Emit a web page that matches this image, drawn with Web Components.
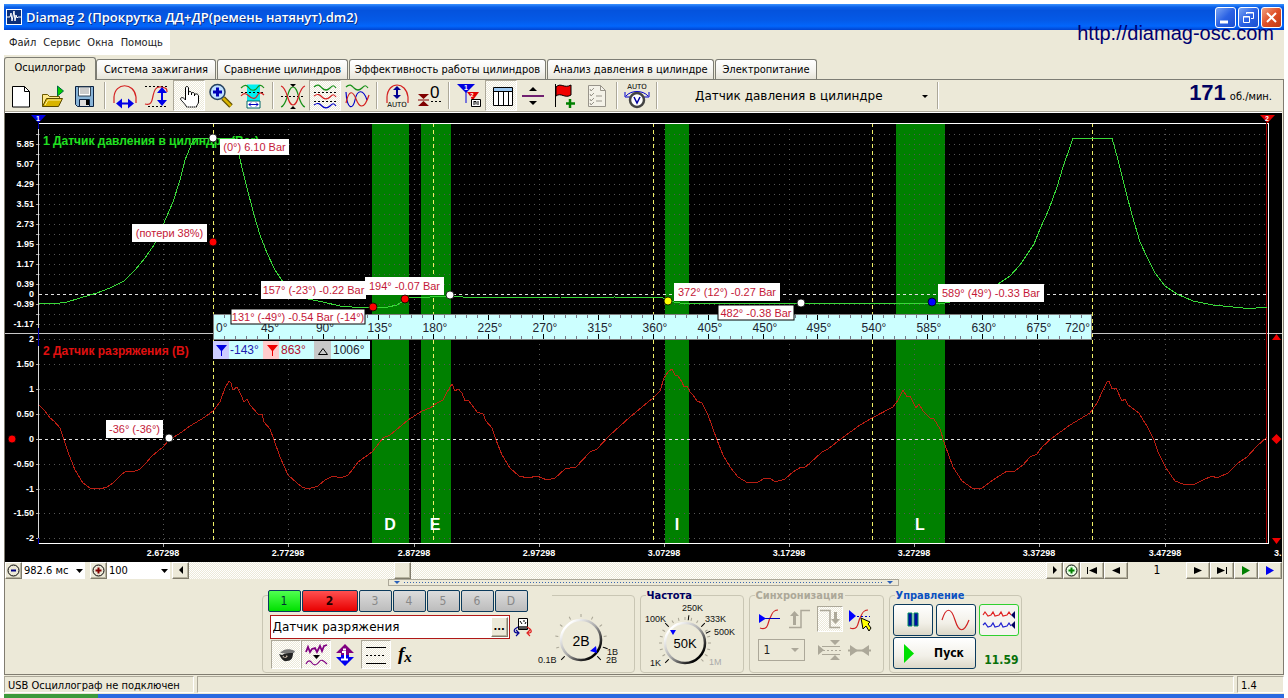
<!DOCTYPE html>
<html lang="ru">
<head>
<meta charset="utf-8">
<title>Diamag 2 (Прокрутка ДД+ДР(ремень натянут).dm2)</title>
<style>
html, body { margin: 0; background: #fff; }
body { font: 11px/14px "DejaVu Sans Condensed", "DejaVu Sans", sans-serif; color: #000; padding: 4px 4px 0; }
</style>
</head>
<body>
<dm-window></dm-window>

<script>
const define = (name, html, setup) => {
  const tpl = document.createElement('template');
  tpl.innerHTML = html;
  customElements.define(name, class extends HTMLElement {
    constructor() {
      super();
      this.attachShadow({ mode: 'open' }).append(tpl.content.cloneNode(true));
    }
    connectedCallback() { if (setup) setup(this.shadowRoot, this); }
  });
};
const XP_BUTTON = `background:#ece9d8;border:1px solid;border-color:#fff #807c6c #807c6c #fff;box-shadow:inset -1px -1px #b8b4a0;`;
const CHECKER = `repeating-conic-gradient(#fff 0 25%, #ece9d8 0 50%) 0 0/2px 2px`;

/* ---------- title bar ---------- */
define('dm-titlebar', `
<style>
:host { display: flex; align-items: center; height: 26px; padding: 0 2px; gap: 4px;
  background: linear-gradient(#3a92ff, #0a5fe8 12%, #0553dd 25%, #0559e6 60%, #0266fc 85%, #0144d0); }
h1 { flex: 1; margin: 0; color: #fff; font: 600 13px/16px "Open Sans", sans-serif; text-shadow: 1px 1px #0a2f86; white-space: nowrap; }
svg { display: block; }
.btns { display: flex; gap: 2px; }
button { width: 21px; height: 21px; padding: 0; border: 1px solid #fff; border-radius: 3px; background: linear-gradient(135deg, #7ba4f2, #2b62e4 50%, #1a4fd0); }
button.close { background: linear-gradient(135deg, #f0a080, #df4e26 50%, #c03a12); }
</style>
<svg width="16" height="16" viewBox="0 0 16 16" aria-hidden="true"><rect width="16" height="16" fill="#fff"/><rect x="1" y="1" width="14" height="14" fill="#0c2f78"/><path d="M1 8h3l1-4 1 8 2-10 1 10 1-6 1 3 1-1h3" fill="none" stroke="#fff"/></svg>
<h1>Diamag 2 (Прокрутка ДД+ДР(ремень натянут).dm2)</h1>
<div class="btns">
<button aria-label="Свернуть"><svg width="19" height="19"><path d="M4 14h8" stroke="#fff" stroke-width="3"/></svg></button>
<button aria-label="Восстановить"><svg width="19" height="19" fill="none" stroke="#fff"><path d="M7.5 6V4.500h7v6H12M7 5h8" /><path d="M4.500 8.500h6v6h-6zM4 9h7"/></svg></button>
<button class="close" aria-label="Закрыть"><svg width="19" height="19"><path d="M5 5l9 9M14 5l-9 9" stroke="#fff" stroke-width="2"/></svg></button>
</div>`);

/* ---------- menu ---------- */
define('dm-menubar', `
<style>
:host { display: flex; height: 25px; }
nav { display: flex; align-items: center; gap: 7px; padding: 0 7px 0 5px; background: #fff; }
a { color: #222; text-decoration: none; }
</style>
<nav><a href="#file">Файл</a><a href="#service">Сервис</a><a href="#windows">Окна</a><a href="#help">Помощь</a></nav>`);

/* ---------- tabs ---------- */
define('dm-tab', `
<style>
:host { display: block; }
button { display: block; box-sizing: border-box; width: 100%; height: 20px; margin: 0; padding: 0; font: inherit; color: #000; white-space: nowrap;
  border: 1px solid #7d7d74; border-bottom: 0; border-radius: 3px 3px 0 0; background: linear-gradient(#fff, #f4f3ee 60%, #e6e4d8); }
:host([selected]) { margin-right: -1px; }
:host([selected]) button { height: 23px; margin-bottom: -1px; padding-bottom: 2px; background: #ece9d8; position: relative; }
</style>
<button role="tab"><slot></slot></button>`, (root, el) => root.querySelector('button').setAttribute('aria-selected', el.hasAttribute('selected')));

define('dm-tabs', `
<style>
:host { display: block; border-bottom: 1px solid #7d7d74; }
div { display: flex; align-items: flex-end; height: 24px; gap: 1px; }
</style>
<div role="tablist">
<dm-tab selected style="width:92px">Осциллограф</dm-tab>
<dm-tab style="width:120px">Система зажигания</dm-tab>
<dm-tab style="width:131px">Сравнение цилиндров</dm-tab>
<dm-tab style="width:197px">Эффективность работы цилиндров</dm-tab>
<dm-tab style="width:167px">Анализ давления в цилиндре</dm-tab>
<dm-tab style="width:102px">Электропитание</dm-tab>
</div>`);

/* ---------- tool bar ---------- */
define('dm-tool', `
<style>
:host { display: block; width: 32px; height: 31px; }
button { display: block; width: 100%; height: 100%; padding: 0; border: 1px solid transparent; background: none; overflow: hidden; }
:host([pressed]) button { border-color: #aca899 #fff #fff #aca899; background: ${CHECKER}; }
::slotted(svg) { display: block; margin: -1px; }
</style>
<button><slot></slot></button>`, (root, el) => root.querySelector('button').setAttribute('aria-label', el.getAttribute('name')));

const icons = [
['Новый', '<path d="M7.5 5.500h12l5 5v15.500h-17z" fill="#fff" stroke="#000"/><path d="M19.500 5.500v5h5" fill="none" stroke="#000"/>'],
['Открыть', '<path d="M5.500 25.500v-12h5l2 2h10v3" fill="#ffe98a" stroke="#6b5a00"/><path d="M5.500 25.500l4-8h16l-4 8z" fill="#d8b400" stroke="#5a4a00"/><path d="M8 24l3-5h13" fill="none" stroke="#fff2a0"/><path d="M20.500 5v10l6-5z" fill="#00d000" stroke="#064"/>'],
['Сохранить', '<path d="M6.500 5.500h18v20h-16l-2-2z" fill="#88b4d8" stroke="#0a2040"/><path d="M9.500 6h12v9h-12z" fill="#fff" stroke="#345"/><path d="M11 8h9M11 10h9M11 12h9" stroke="#999"/><path d="M10.500 18.500h10v7h-10z" fill="#ddd" stroke="#0a2040"/><path d="M17 19h3v5h-3z" fill="#000"/>'],
'sep',
['Масштаб по горизонтали', '<path d="M5 22V16C6 1 25 1 27 16v6" fill="none" stroke="#d42020" stroke-width="1.2"/><path d="M7 22.500l6-5v4h6v-4l6 5-6 5v-4h-6v4z" fill="#0000e8"/>'],
['Масштаб по вертикали', '<path d="M4 5.500h22M7 25.500h20" stroke="#000" stroke-dasharray="2"/><path d="M4 23c7 2 7-4 8-8s2-10 8-9 6 2 6 5" fill="none" stroke="#d42020" stroke-width="1.2"/><path d="M21 6l5 6h-4v7h4l-5 6-5-6h4v-7h-4z" fill="#0000e8"/>'],
['Рука', '<path d="M12.500 18V7c0-2 3-2 3 0v7-2c0-2 3-2 3 0v2-1c0-2 3-2 3 0v2-1c1-2 4-1 4 1v6c0 2-2 3-2 5h-10c-1-3-6-7-6-8s2-3 5 1z" fill="#fff" stroke="#000"/><path d="M12 26h13" stroke="#fff" stroke-dasharray="1"/>', 1],
['Лупа', '<path d="M18 17l8 8" stroke="#5a4a00" stroke-width="5"/><path d="M18 17l8 8" stroke="#d8b400" stroke-width="2.5"/><circle cx="12.500" cy="11" r="7.5" fill="#bfe0ff" stroke="#24405e" stroke-width="1.5"/><path d="M12.500 6.500v9M8 11h9" stroke="#0000b8" stroke-width="3"/>'],
['Выделение', '<path d="M10 3.500h13v23h-13z" fill="#00f0f0"/><path d="M4 7c4-4 6-3 8 0s6 3 8 0 4-4 7 0" fill="none" stroke="#189018" stroke-width="1.2"/><path d="M4 11.500h24" stroke="#000" stroke-dasharray="2"/><path d="M4 15c3-4 6-2 8 0s6 4 8 0 4-4 7-1" fill="none" stroke="#d42020" stroke-width="1.2"/><path d="M10 20h13v7h-13z" fill="#fff" stroke="#066"/><path d="M12 23.500h9M14 21.500l-2 2 2 2M19 21.500l2 2-2 2" fill="none" stroke="#0000c0"/>'],
'sep',
['Сложить', '<path d="M4 15.500h24" stroke="#000" stroke-dasharray="2"/><path d="M4 26C11 24 10 6 16 6s5 18 12 20" fill="none" stroke="#189018" stroke-width="1.2"/><path d="M4 5c7 2 6 19 12 19s5-17 12-19" fill="none" stroke="#d42020" stroke-width="1.2"/><path d="M13 3h6l-3 3zM13 28h6l-3-3z"/>'],
['Отдельно', '<g fill="none" stroke-width="1.2"><path d="M5 6c4-4 6-1 8 1s5 3 8 0 4-3 6 0" stroke="#189018"/><path d="M5 15c4-3 6-1 8 1s5 3 8 0 4-3 6 0" stroke="#d42020"/><path d="M5 24c4-3 6-1 8 1s5 3 8 0 4-3 6 0" stroke="#0000c8"/><path d="M5 11.500h23M5 20.500h23" stroke="#000" stroke-width="1" stroke-dasharray="2"/></g>', 1],
['Вместе', '<g fill="none" stroke-width="1.2"><path d="M5 6c4-4 6-1 8 1s5 3 8 0 4-3 6 0" stroke="#189018"/><path d="M5 11c1 18 7 18 9 8s8-12 12 0" stroke="#0000c8"/><path d="M5 22c3-14 7-12 10-4s8 12 13-4" stroke="#d42020"/></g>'],
'sep',
['Авто усиление', '<path d="M6 22V16C7 0 25 0 27 16v6" fill="none" stroke="#d42020" stroke-width="1.2"/><path d="M16 5l4 4h-3v5h3l-4 4-4-4h3V9h-3z" fill="#000090"/><text x="16" y="26" text-anchor="middle" font-size="7" font-family="DejaVu Sans">AUTO</text>'],
['Ноль', '<path d="M5 13h11l-5.500 5zM5 25h11l-5.500-5z" fill="#800000"/><path d="M5 19h11" stroke="#800000"/><text x="17" y="17" font-size="17" font-family="Liberation Sans">0</text><path d="M18 20.500h10" stroke="#000" stroke-dasharray="2"/>'],
'sep',
['Маркеры', '<path d="M4 3h18l-9 9z" fill="#0000e0"/><path d="M13 10v12" stroke="#0000e0"/><path d="M14 11h12l-6 8z" fill="#e00000"/><path d="M19 15v10" stroke="#e00000"/><path d="M18.500 18.500h9v7h-9z" fill="#fff" stroke="#000"/><path d="M21 20v4M21 20.500h2v3M25 20v4" stroke="#000" fill="none"/><text x="13" y="9" text-anchor="middle" font-size="7" font-weight="bold" fill="#fff" font-family="Liberation Sans">1</text><text x="19" y="16" text-anchor="middle" font-size="6" font-weight="bold" fill="#fff" font-family="Liberation Sans">2</text>'],
['Таблица', '<path d="M8.500 6.500h19v18h-19z" fill="#fff" stroke="#000"/><path d="M9 7h18v3h-18z" fill="#9cc8f0"/><path d="M8 10.500h20M13.500 10v15M18.500 10v15M23.500 10v15" stroke="#000" fill="none"/>', 1],
['Разделить', '<path d="M12 10h8l-4-4zM12 20h8l-4 4z"/><path d="M5 15h22" stroke="#702070" stroke-width="2"/>'],
['Добавить флаг', '<path d="M6.500 3v23" stroke="#000"/><path d="M7 6c5-5 8 2 15-2v10c-6 4-10-3-15 1z" fill="#f00000" stroke="#000"/><path d="M21 18v9M17 22.500h9" stroke="#008000" stroke-width="2.500"/>'],
['Отчёт', '<path d="M7.5 4.500h12l5 5v16h-17z" fill="#f4f2e8" stroke="#98948a"/><path d="M19.500 4.500v5h5M9 8l1 2 3-3M9 13l1 2 3-3M9 18l1 2 3-3M9 22l1 2 3-3M15 15h6M15 20h6" fill="none" stroke="#98948a"/>'],
'sep',
['Авто вольт', '<text x="16" y="8" text-anchor="middle" font-size="7" font-family="DejaVu Sans">AUTO</text><path d="M5 15c5-6 17-6 22 0M4 11v5h5M28 11v5h-5" fill="none" stroke="#0000d0"/><circle cx="16" cy="19" r="7" fill="#fff" stroke="#444" stroke-width="2.5"/><path d="M13 16l3 6 3-6" fill="none" stroke="#0000a0" stroke-width="1.5"/>'],
'sep'];

define('dm-toolbar', `
<style>
:host { display: flex; align-items: stretch; height: 31px; border-bottom: 1px solid #aca899; box-shadow: 0 1px #fff; margin-bottom: 1px; }
i { width: 2px; margin: 2px 3px; border-left: 1px solid #aca899; border-right: 1px solid #fff; box-sizing: border-box; }
.pick { position: relative; width: 273px; display: flex; }
.pick svg { position: absolute; right: 6px; top: 15px; pointer-events: none; }
select { appearance: none; flex: 1; border: 0; background: none; padding: 0 20px 0 34px; color: #000; font: 12px "DejaVu Sans", sans-serif; }
.rpm { flex: 1; display: flex; justify-content: flex-end; align-items: baseline; gap: 4px; padding-right: 10px; }
b { font: bold 22px/26px "Liberation Sans", sans-serif; color: #000060; }
</style>
${icons.map(i => i === 'sep' ? '<i></i>' : `<dm-tool name="${i[0]}"${i[2] ? ' pressed' : ''}><svg width="32" height="30" viewBox="0 0 32 30">${i[1]}</svg></dm-tool>`).join('')}
<span class="pick"><select aria-label="Датчик"><option>Датчик давления в цилиндре</option></select><svg width="6" height="4"><path d="M0 0h6l-3 3z"/></svg></span><i></i>
<span class="rpm"><b>171</b><span>об./мин.</span></span>`);

/* ---------- oscilloscope ---------- */
const green1 = '39,303 60,303 67,302 80,298 97,293 110,288 124,281 135,270 145,258 154,245 163,225 173,202 180,180 185,160 192,143 195,138 234,138 239,155 245,180 254,215 260,235 267,253 275,270 283,282 295,292 308,299 323,302 340,306 352,307 373,307 388,307 397,305 403,301 410,297 430,297 450,296 463,297 480,298 500,297 560,297 600,298 614,297 663,298 668,301 680,303 700,303 704,304 708,303 801,303 860,303 945,303 965,299 983,292 998,284 1010,276 1020,265 1028,253 1034,244 1040,229 1049,209 1057,187 1063,167 1070,147 1073,138 1112,138 1118,160 1125,188 1132,215 1140,242 1147,257 1155,273 1165,286 1177,294 1193,301 1213,305 1243,308 1256,308 1267,307';
const red2 = '39,405 42,408 45,411 50,418 54,421 60,428 64,440 68,452 75,470 83,483 90,488 100,489 107,487 113,483 122,474 127,471 133,472 140,469 146,463 152,456 163,447 169,440 177,435 182,432 190,426 205,417 213,411 220,402 225,388 229,381 231,383 233,390 237,387 241,395 244,402 247,399 250,405 258,414 262,414 264,422 270,429 274,440 280,457 288,475 297,483 302,487 308,489 318,486 325,480 333,476 341,478 348,475 353,469 358,462 372,452 380,442 383,438 390,435 408,420 422,411 430,408 437,403 443,400 447,392 452,384 455,391 458,389 462,393 465,401 468,400 472,405 477,412 483,414 486,421 492,428 496,440 502,455 510,468 519,476 528,478 537,476 547,480 555,478 565,469 576,467 590,452 597,449 610,435 630,417 648,402 653,398 660,391 664,378 668,372 672,369 675,375 678,376 682,382 684,387 687,386 690,392 693,395 697,401 702,403 708,415 717,440 723,455 730,467 738,477 748,483 758,482 765,478 770,478 775,482 785,479 793,472 801,467 804,468 810,463 822,452 828,449 842,438 860,425 872,418 893,407 898,400 903,390 907,397 910,396 916,408 919,404 923,411 930,418 934,419 940,429 945,445 953,467 962,481 972,488 982,488 993,480 1007,471 1015,471 1023,465 1030,457 1037,454 1042,447 1052,438 1070,425 1090,413 1097,403 1103,390 1107,382 1109,381 1112,389 1116,388 1122,401 1125,399 1128,405 1139,413 1143,420 1147,426 1154,440 1158,452 1166,468 1175,481 1183,484 1195,484 1203,480 1212,476 1217,478 1228,473 1238,463 1247,457 1257,446 1267,437';

const hline = (y, cls) => `<path class="${cls}" d="M39 ${y + .5}H1267"/>`;
const scope = (() => {
  let s = '';
  const bands = [[372, 37, 'D', 390], [421, 30, 'E', 435], [665, 24, 'I', 677], [896, 49, 'L', 920]];
  bands.forEach(b => s += `<rect x="${b[0]}" y="124" width="${b[1]}" height="419" fill="#008000"/>`);
  for (let y = 134; y < 330; y += 10) if (y !== 294) s += hline(y, 'dot') + `<path d="M36 ${y + .5}h2" stroke="#aaa"/>`;
  const low = [[339, '2'], [364, '1.50'], [389, '1'], [414, '0.50'], [439, '0'], [464, '-0.50'], [489, '-1'], [513, '-1.50'], [538, '-2']];
  low.forEach(([y]) => { if (y !== 439) s += hline(y, 'dot'); s += `<path d="M36 ${y + .5}h2" stroke="#aaa"/>`; });
  const xs = [163, 288, 414, 539, 664, 789, 914, 1039, 1165];
  xs.forEach((x, i) => s += `<path class="dot" d="M${x + .5} 129V543"/><path d="M${x + .5} 543v4" stroke="#aaa"/><text class="ax" x="${x}" y="556" text-anchor="middle">${(2.67298 + i / 10).toFixed(5)}</text>`);
  s += '<text class="ax" x="1274" y="556">3.</text>' + hline(294, 'zero') + hline(439, 'zero');
  [213, 433, 653, 872, 1092].forEach(x => s += `<path class="cyc" d="M${x + .5} 123V543"/>`);
  const up = [[144, '5.85'], [164, '5.07'], [184, '4.29'], [204, '3.51'], [224, '2.73'], [244, '1.95'], [264, '1.17'], [284, '0.39'], [294, '0'], [304, '-0.39'], [324, '-1.17']];
  up.concat(low).forEach(([y, t]) => s += `<text class="ax" x="34" y="${y + 3}" text-anchor="end">${t}</text>`);
  s += '<path d="M5 333.500H1282" stroke="#c8c8c8"/><path d="M38.500 123V543" stroke="#d8d8d8"/><path d="M38 123.500H1269M38 543.500H1269M1268.500 123V544" stroke="#fff"/><path d="M1266.500 123V543" stroke="#a00000"/><path d="M38.500 123v6M38.500 328v18M38.500 538v6" stroke="#0000b0"/>';
  s += `<text x="43" y="145" class="name" fill="#20e020">1 Датчик давления в цилиндре (Bar)</text><text x="43" y="355" class="name" fill="#e01010">2 Датчик разряжения (В)</text>`;
  s += `<polyline points="${green1}" stroke="#38d838"/><polyline points="${red2}" stroke="#cc2014" opacity=".9"/>`;
  bands.forEach(b => s += `<text x="${b[3]}" y="530" class="band">${b[2]}</text>`);
  /* crank angle ruler */
  s += '<rect x="213.500" y="314.500" width="878" height="25" fill="#cff" stroke="#808080"/>';
  for (let k = 1; k < 80; k++) {
    const x = Math.round(213 + k * 10.99) + .5, major = k % 5 === 0;
    s += `<path d="M${x} 315v${major ? 5 : 3}M${x} 339v-${major ? 5 : 3}" stroke="${major ? '#000' : '#778'}"/>`;
    if (major) s += `<text class="deg" x="${x + 1.5}" y="332" text-anchor="middle">${k * 9}°</text>`;
  }
  s += '<text class="deg" x="216" y="332">0°</text><text class="deg" x="1090" y="332" text-anchor="end">720°</text>';
  /* marker readout */
  s += '<path d="M213 341h157v18H213z" fill="#cff"/><path d="M213 341h16v18h-16z" fill="#ccf"/><path d="M263 341h16v18h-16z" fill="#fcc"/><path d="M314 341h17v18h-17z" fill="#c8c8c8"/><path d="M216 345h11l-5 6v5h-1v-5z" fill="#0000e0"/><path d="M267 345h11l-5 6v5h-1v-5z" fill="#f00000"/><path d="M318.500 354.500h9l-4.500-6z" fill="none" stroke="#000"/><text class="deg" x="230" y="354" style="fill:#2020b0">-143°</text><text class="deg" x="281" y="354" style="fill:#b01030">863°</text><text class="deg" x="333" y="354">1006°</text>';
  const tips = [[220, 139, 69, 16, '(0°) 6.10 Bar'], [132, 224, 75, 18, '(потери 38%)'], [261, 281, 105, 18, '157° (-23°) -0.22 Bar'], [365, 277, 79, 18, '194° -0.07 Bar'], [231, 309, 134, 15, '131° (-49°) -0.54 Bar (-14°)', 1], [674, 283, 106, 18, '372° (12°) -0.27 Bar'], [718, 305, 76, 15, '482° -0.38 Bar', 1], [938, 284, 106, 18, '589° (49°) -0.33 Bar'], [106, 420, 57, 18, '-36° (-36°)']];
  tips.forEach(([x, y, w, h, t, b]) => s += `<rect x="${x}" y="${y}" width="${w}" height="${h}" fill="#fff"${b ? ' stroke="#000"' : ''}/><text class="tip" x="${x + w / 2}" y="${y + h / 2 + 4}" text-anchor="middle">${t}</text>`);
  [[213, 138, '#fff'], [213, 242, '#f00'], [373, 307, '#f00'], [405, 299, '#f00'], [450, 295, '#fff'], [668, 301, '#ff0'], [801, 303, '#fff'], [932, 302, '#00f'], [169, 438, '#fff'], [12, 439, '#f00']].forEach(p => s += `<circle cx="${p[0]}" cy="${p[1]}" r="4" fill="${p[2]}" stroke="#000" stroke-width=".8"/>`);
  s += '<path d="M31 115h15l-7.500 8z" fill="#0000e0"/><path d="M1260 115h15l-7.500 8z" fill="#e00000"/><text x="38" y="121" class="mk">1</text><text x="1267" y="121" class="mk">2</text><path d="M1276.500 434l5 5-5 5-5-5zM1272 340h9l-4.500-6zM1272 538h9l-4.500 6z" fill="#f00000"/>';
  return s;
})();

define('dm-scope', `
<style>
:host { display: block; background: #000; }
svg { display: block; width: 100%; height: auto; font-family: "Liberation Sans", sans-serif; }
polyline { fill: none; shape-rendering: crispEdges; }
path.dot { stroke: #565656; stroke-dasharray: 1 4; }
path.zero { stroke: #e0e0e0; stroke-dasharray: 3 3; }
path.cyc { stroke: #f0f068; stroke-dasharray: 4 3; }
.ax { font-size: 9px; font-weight: bold; fill: #fff; }
.name { font-size: 12px; font-weight: bold; }
.band { font-size: 16px; font-weight: bold; fill: #fff; text-anchor: middle; }
.deg { font-size: 12px; fill: #1c2430; }
.tip { font-size: 11px; fill: #c41838; }
.mk { font-size: 7px; font-weight: bold; fill: #fff; text-anchor: middle; }
</style>
<svg viewBox="5 113 1277 449">${scope}</svg>`);

/* ---------- scroll row ---------- */
const tri = (d, c = '#000') => `<svg width="12" height="11" viewBox="0 0 12 11"><path d="${d}" fill="${c}"/></svg>`;
define('dm-scrollrow', `
<style>
:host { display: flex; height: 17px; }
button { ${XP_BUTTON} display: flex; align-items: center; justify-content: center; padding: 0; box-sizing: border-box; width: 17px; flex: none; }
button.w { width: 24px; }
button svg { flex: none; }
span { position: relative; width: 63px; display: flex; margin-right: 5px; }
span + button + span { margin-right: 2px; }
span svg { position: absolute; right: 2px; top: 7px; pointer-events: none; }
select { appearance: none; width: 100%; padding: 0 2px; border: 0; background: #fff; color: #000; font: inherit; }
.track { flex: 1; background: ${CHECKER}; padding-left: 205px; display: flex; }
.page { width: 58px; text-align: center; line-height: 17px; font-size: 12px; }
</style>
<button aria-label="Уменьшить"><svg width="13" height="13"><circle cx="6.500" cy="6.500" r="5.500" fill="none" stroke="#000"/><path d="M4 6.500h5" stroke="#000080" stroke-width="2"/></svg></button>
<span><select aria-label="Время"><option>982.6 мс</option></select><svg width="7" height="4"><path d="M0 0h7l-3.500 4z"/></svg></span>
<button aria-label="Увеличить"><svg width="13" height="13"><circle cx="6.500" cy="6.500" r="5.500" fill="none" stroke="#000"/><path d="M3.500 6.500h6M6.500 3.500v6" stroke="#800000" stroke-width="2"/></svg></button>
<span><select aria-label="Масштаб"><option>100</option></select><svg width="7" height="4"><path d="M0 0h7l-3.500 4z"/></svg></span>
<button aria-label="Влево">${tri('M8 1v8L4 5z')}</button>
<div class="track"><button aria-label="Ползунок"></button></div>
<button aria-label="Вправо">${tri('M4 1v8l4-4z')}</button>
<button aria-label="Приблизить"><svg width="13" height="13"><circle cx="6.500" cy="6.500" r="5.500" fill="#e4ffe0" stroke="#000"/><path d="M3.500 6.500h6M6.500 3.500v6" stroke="#008000" stroke-width="2"/></svg></button>
<button class="w" aria-label="В начало">${tri('M1 2h1v7H1zM11 2v7L3 5.500z')}</button>
<button class="w" aria-label="Назад">${tri('M10 2v7L2 5.500z')}</button>
<div class="page">1</div>
<button class="w" aria-label="Вперёд">${tri('M2 2v7l8-3.500z')}</button>
<button class="w" aria-label="В конец">${tri('M1 2v7l8-3.500zM10 2h1v7h-1z')}</button>
<button class="w" aria-label="Пуск">${tri('M2 1v9l8-4.500z', '#008000')}</button>
<button class="w" aria-label="Следующий">${tri('M2 1v9l8-4.500z', '#0000f0')}</button>`);

define('dm-splitter', `
<style>
:host { display: flex; justify-content: center; }
div { box-sizing: border-box; width: 511px; height: 7px; border: 1px solid #aca899; display: flex; align-items: center; gap: 4px; padding: 0 5px; }
i { flex: 1; height: 1px; background: repeating-linear-gradient(90deg, #3a68b0 0 1px, transparent 1px 3px); }
svg { display: block; }
</style>
<div><svg width="6" height="4"><path d="M0 0h6l-3 3z" fill="#2a60b8"/></svg><i></i><svg width="6" height="4"><path d="M0 0h6l-3 3z" fill="#2a60b8"/></svg></div>`);

/* ---------- knobs ---------- */
define('dm-knob', `
<style>:host { display: block; } svg { display: block; font-family: "Liberation Sans", sans-serif; } .t { font-size: 9px; fill: #111; } .v { font-size: 14px; text-anchor: middle; }</style>
<svg width="102" height="68" viewBox="-48 -40 102 68" role="img"><defs><linearGradient id="g" x2="1" y2="1"><stop offset=".15" stop-color="#fff"/><stop offset=".5" stop-color="#aaa"/><stop offset=".85" stop-color="#000"/></linearGradient></defs><g id="k"></g></svg>`, (root, el) => {
  const freq = el.getAttribute('kind') === 'freq';
  const dark = freq ? [-135, -45, 8, 45, 65] : [-135, 108, 135];
  const step = freq ? 15 : 27;
  let s = '';
  const tick = (a, c, r) => s += `<path d="M0 -23V-${r}" transform="rotate(${a})" stroke="${c}"/>`;
  for (let a = -135; a <= 135; a += step) tick(a, '#a8a494', 26);
  dark.forEach(a => tick(a, '#000', 28));
  s += `<circle r="20" fill="#ece9d8" stroke="url(#g)" stroke-width="2.500"/>`;
  s += freq
    ? `<path d="M-15 -13h6l-3 5z" fill="#00f"/><text class="v" y="5" style="font-size:13px">50K</text><text class="t" x="-3" y="-32">250K</text><text class="t" x="-40" y="-21">100K</text><text class="t" x="20" y="-21">333K</text><text class="t" x="29" y="-8">500K</text><text class="t" x="-35" y="23">1K</text><text class="t" x="24" y="22" style="fill:#aaa">1M</text>`
    : `<path d="M9 11l6-5 1 7z" fill="#00f"/><text class="v" y="6">2В</text><text class="t" x="-43" y="23">0.1В</text><text class="t" x="26" y="15">1В</text><text class="t" x="25" y="23">2В</text>`;
  root.getElementById('k').innerHTML = s;
});

/* ---------- group box ---------- */
define('dm-group', `
<style>
:host { display: flex; }
fieldset { flex: 1; min-width: 0; box-sizing: border-box; margin: 0; padding: 0; border: 1px solid #c9c6b4; border-radius: 4px; }
legend { margin-left: 5px; padding: 0 1px; line-height: 13px; font-weight: bold; color: var(--legend, #000060); }
:host([plain]) fieldset { margin-top: 6px; }
</style>
<fieldset><legend></legend><slot></slot></fieldset>`, (root, el) => {
  const l = root.querySelector('legend');
  if (el.getAttribute('title-text')) l.textContent = el.getAttribute('title-text'); else l.remove();
});

define('dm-channels', `
<style>
:host { display: block; }
dm-group { height: 84px; }
.row { display: flex; }
.body { display: flex; }
.left { width: 265px; padding-left: 5px; }
.tabs { margin-top: -6px; background: #ece9d8; width: 284px; gap: 1px; }
.tabs button { flex: none; box-sizing: border-box; width: 33px; height: 22px; padding: 0; border: 1px solid #0b3a5c; border-radius: 2px; font: 12px "DejaVu Sans Condensed", sans-serif; color: #888; background: linear-gradient(#dcdcdc, #bcbcbc); }
.tabs button.g { background: linear-gradient(#50ff50, #00e000); color: #033; }
.tabs button.r { width: 56px; background: linear-gradient(#ff5050, #e80000); color: #200; font-weight: bold; }
.name { margin: 3px 0 0 2px; gap: 3px; align-items: center; }
.box { display: flex; box-sizing: border-box; width: 241px; height: 24px; border: 1px solid #b01818; background: #fff; padding: 1px; }
input { flex: 1; min-width: 0; border: 0; outline: 0; padding: 0 1px; font: 12px "DejaVu Sans", sans-serif; color: #000; }
.box button { ${XP_BUTTON} width: 17px; padding: 0; font: bold 10px/12px "DejaVu Sans", sans-serif; }
.icons { margin: 1px 0 0 3px; height: 29px; }
.icons dm-tool { height: 29px; width: 30px; }
svg { display: block; }
dm-knob { margin-top: 4px; }
</style>
<dm-group plain>
<div class="body"><div class="left">
<div class="row tabs"><button class="g">1</button><button class="r">2</button><button>3</button><button>4</button><button>5</button><button>6</button><button>D</button></div>
<div class="row name"><div class="box"><input aria-label="Название датчика" value="Датчик разряжения"><button aria-label="Выбрать датчик">...</button></div>
<svg width="20" height="20"><path d="M5.500 1.500h9v11h-9z" fill="#fff" stroke="#000"/><path d="M6 9h8v3H6z" fill="#555"/><path d="M7 4l2 3M11 3v2M13 5l-1 2" stroke="#000"/><path d="M5 10c-6 3-4 6 0 6M3 13l3 3-3 3" fill="none" stroke="#000090" stroke-width="1.2"/><path d="M14 10c6 3 5 6 1 6M17 13l-3 3 3 3" fill="none" stroke="#e02020" stroke-width="1.2"/></svg></div>
<div class="row icons">
<dm-tool name="Показать" pressed><svg width="30" height="28"><path d="M9 12c3-4 9-5 15-2l-1 2-3 1z" fill="#777"/><path d="M8 13l3 1c3-2 7-2 11-2 0 5-2 8-6 8-4 1-6-3-8-7z" fill="#222"/><path d="M11 16l3-2 3 1-2 2z" fill="#c8b8a8"/><circle cx="14" cy="15" r="1"/></svg></dm-tool>
<dm-tool name="Сглаживание" pressed><svg width="30" height="28"><path d="M5 11l2-5 2 5 2-3 3-1 2 4 3-6 2 5 2-5 3-1" fill="none" stroke="#800080" stroke-width="1.8"/><path d="M12 14h7l-3.500 4z"/><path d="M5 23c2-4 4-4 6-1s5 2 7-1 4-2 8 2" fill="none" stroke="#800080" stroke-width="1.2"/></svg></dm-tool>
<dm-tool name="Сдвиг"><svg width="30" height="28"><path d="M14 3l9 9h-5v2h-8v-2H5z" fill="#800080"/><path d="M14 25l9-9h-5v-2h-8v2H5z" fill="#0000f0"/><path d="M11 11h3v7M10 18.500h7M12 8.500h3" fill="none" stroke="#fff" stroke-width="2"/></svg></dm-tool>
<dm-tool name="Уровни" pressed><svg width="30" height="28"><path d="M5 6.500h20M5 22.500h20" stroke="#000"/><path d="M5 14.500h20" stroke="#000" stroke-dasharray="2"/></svg></dm-tool>
<dm-tool name="Формула"><svg width="30" height="28"><text x="7" y="19" font-family="Liberation Serif" font-style="italic" font-weight="bold" font-size="19">f<tspan font-size="15" dy="2">x</tspan></text></svg></dm-tool>
</div></div>
<dm-knob kind="volt"></dm-knob></div>
</dm-group>`);

define('dm-frequency', `
<style>:host { display: block; } dm-group { height: 84px; } dm-knob { margin: 1px 0 0 -4px; }</style>
<dm-group title-text="Частота"><dm-knob kind="freq"></dm-knob></dm-group>`);

define('dm-sync', `
<style>
:host { display: block; }
dm-group { height: 84px; --legend: #aca899; }
div { display: grid; grid-template-columns: 30px 30px 30px 32px; padding: 4px 0 0 7px; }
dm-tool { width: 26px; height: 26px; }
svg { display: block; }
span { position: relative; grid-column: span 2; display: flex; width: 47px; height: 22px; margin: 7px 0 0 1px; }
span svg { position: absolute; right: 6px; top: 9px; pointer-events: none; }
select { appearance: none; width: 100%; border: 1px solid #aca899; background: none; padding: 0 5px; font: inherit; font-size: 12px; color: #222; }
dm-tool.s { margin-top: 5px; }
</style>
<dm-group title-text="Синхронизация"><div>
<dm-tool name="Фронт"><svg width="26" height="26"><path d="M3 22c9 3 8-7 10-10s2-8 8-8" fill="none" stroke="#d02020" stroke-width="1.2"/><path d="M2 12.500h21" stroke="#0000c0"/><path d="M2 8v9l7-4.500z" fill="#00f"/></svg></dm-tool>
<dm-tool name="По нарастанию"><svg width="26" height="26"><path d="M2 21.500h12v-17h9" fill="none" stroke="#aca899" stroke-width="1.5"/><path d="M6 19v-9H3l4.500-5 4.500 5H9v9z" fill="#aca899"/></svg></dm-tool>
<dm-tool name="По спаду" pressed><svg width="26" height="26"><path d="M3 4.500h10v17h10" fill="none" stroke="#aca899" stroke-width="1.5"/><path d="M17 6v7h-3l4.500 5 4.500-5h-3V6z" fill="#aca899"/></svg></dm-tool>
<dm-tool name="Выбор уровня"><svg width="26" height="26"><path d="M3 22c9 3 8-7 10-10s2-8 8-8" fill="none" stroke="#d02020" stroke-width="1.2"/><path d="M2 10.500h21" stroke="#0000c0" stroke-dasharray="2"/><path d="M2 4v12l7-6z" fill="#00f"/><path d="M14 12l9 4-2 2 3 4-2 3-3-5-3 3z" fill="#ff0" stroke="#000"/></svg></dm-tool>
<span><select aria-label="Канал"><option>1</option></select><svg width="8" height="5"><path d="M0 0h8l-4 4z" fill="#aca899"/></svg></span>
<dm-tool class="s" name="Уровень"><svg width="26" height="26"><path d="M1 8v10l6-5zM13 3h10l-5 5zM13 23h10l-5-5z" fill="#aca899"/><path d="M5 9.500h18M5 17.500h18" stroke="#aca899"/><path d="M6 13.500h18" stroke="#aca899" stroke-dasharray="2"/></svg></dm-tool>
<dm-tool class="s" name="Сжать"><svg width="26" height="26"><path d="M3 8l8 5.500L3 19zM22 8l-8 5.500 8 5.500z" fill="#aca899"/><path d="M1 13.500h23" stroke="#aca899" stroke-width="2"/></svg></dm-tool>
</div></dm-group>`);

define('dm-control', `
<style>
:host { display: block; }
dm-group { height: 84px; --legend: #0b50c0; }
div { display: grid; grid-template-columns: 40px 40px 40px; grid-template-rows: 32px 32px; gap: 1px 3px; padding: 2px 3px; }
button { display: flex; align-items: center; justify-content: center; padding: 0; border: 1px solid #0b3a5c; border-radius: 3px; background: linear-gradient(#fff, #f2f0e8 60%, #dcd8c8); color: #000; font: bold 12px "DejaVu Sans Condensed", sans-serif; }
.go { grid-column: span 2; gap: 19px; }
.on { border: 1px solid #30d030; background: #f6f4f0; }
output { align-self: end; justify-self: end; font-weight: bold; font-size: 12px; line-height: 17px; color: #087008; }
</style>
<dm-group title-text="Управление"><div>
<button aria-label="Пауза"><svg width="14" height="16"><path d="M2 1h4v13H2zM8 1h4v13H8z" fill="#0010a0" stroke="#009060"/></svg></button>
<button aria-label="Один период"><svg width="32" height="24"><path d="M2 12C6-1 11-1 15 12s9 13 14 0" fill="none" stroke="#d02020" stroke-width="1.2"/></svg></button>
<button class="on" aria-label="Все каналы"><svg width="34" height="24"><path d="M1 7l2-3 3 4 3-1 2-3 2 4 4-1 2-3 2 4 4-1 2-3 2 3" fill="none" stroke="#e02020" stroke-width="1.2"/><path d="M1 17l2-2 3 4 3-1 2-3 2 4 4-1 2-3 2 4 4-1 2-3 2 3" fill="none" stroke="#2020d0" stroke-width="1.2"/><path d="M33 3v8l-4-4zM33 13v8l-4-4z" fill="#000060"/></svg></button>
<button class="go"><svg width="11" height="19"><path d="M0 0v19l10-9.500z" fill="#00e000"/></svg>Пуск</button>
<output>11.59</output>
</div></dm-group>`);

/* ---------- status bar ---------- */
define('dm-status', `
<style>
:host { display: flex; gap: 3px; height: 17px; margin-top: 1px; }
span { box-sizing: border-box; padding: 0 3px; line-height: 17px; border: 1px solid; border-color: #aca899 #fff #fff #aca899; white-space: nowrap; }
.a { width: 190px; } .b { flex: 1; } .c { width: 47px; }
</style>
<span class="a">USB Осциллограф не подключен</span><span class="b"></span><span class="c">1.4</span>`);

/* ---------- window ---------- */
define('dm-window', `
<style>
:host { display: block; position: relative; background: #ece9d8; }
.site { position: absolute; top: 18px; right: 10px; font: 20px/22px "Liberation Sans", sans-serif; color: #000070; text-decoration: none; }
.page { border: 1px solid #807c70; border-top: 0; padding-right: 1px; }
.panels { display: flex; justify-content: center; gap: 5px; padding: 3px 4px 1px 0; }
.a { width: 373px; } .b { width: 104px; } .c { width: 135px; } .d { width: 133px; }
.task { height: 4px; margin-top: 1px; background: linear-gradient(90deg, #3c9a3c 94px, #2a6ae0 94px); }
</style>
<dm-titlebar></dm-titlebar>
<a class="site" href="http://diamag-osc.com">http://diamag-osc.com</a>
<dm-menubar></dm-menubar>
<dm-tabs></dm-tabs>
<main class="page">
<dm-toolbar></dm-toolbar>
<dm-scope></dm-scope>
<dm-scrollrow></dm-scrollrow>
<dm-splitter></dm-splitter>
<div class="panels"><dm-channels class="a"></dm-channels><dm-frequency class="b"></dm-frequency><dm-sync class="c"></dm-sync><dm-control class="d"></dm-control></div>
</main>
<dm-status></dm-status>
<div class="task"></div>`);
</script>
</body>
</html>
